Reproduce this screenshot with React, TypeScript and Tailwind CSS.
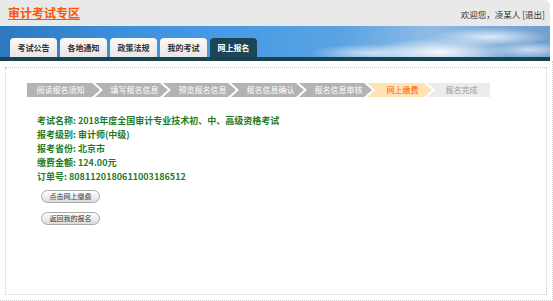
import React from "react";

const steps = [
  { label: "阅读报名须知", w: 73, state: "done" },
  { label: "填写报名信息", w: 73, state: "done" },
  { label: "预览报名信息", w: 73, state: "done" },
  { label: "报名信息确认", w: 73, state: "done" },
  { label: "报名信息审核", w: 73, state: "done" },
  { label: "网上缴费", w: 65, state: "active" },
  { label: "报名完成", w: 63, state: "todo" },
];

const tabs = ["考试公告", "各地通知", "政策法规", "我的考试", "网上报名"];

export default function App() {
  return (
    <div
      className="w-[553px] h-[301px] bg-white overflow-hidden text-[#333]"
      style={{ fontFamily: '"Noto Sans CJK SC", "Noto Sans", sans-serif' }}
    >
      <div className="w-[550px]">
        {/* header */}
        <div className="h-[26px] bg-[#e9e9e9] rounded-tr-[6px] flex items-center justify-between pl-[8px] pr-[5px]">
          <span className="text-[12px] leading-[12px] font-bold text-[#ff5400] underline underline-offset-[1px]">
            审计考试专区
          </span>
          <span className="text-[8.5px] leading-[9px] text-[#333] pt-[2px]">
            欢迎您，凌某人 [退出]
          </span>
        </div>
        {/* banner */}
        <div className="h-[31px] flex items-end pl-[10px] gap-[3px] [background-image:radial-gradient(ellipse_70px_14px_at_440px_26px,rgba(255,255,255,0.9),rgba(255,255,255,0)),radial-gradient(ellipse_60px_9px_at_490px_11px,rgba(240,245,252,0.85),rgba(255,255,255,0)),radial-gradient(ellipse_60px_9px_at_370px_27px,rgba(235,242,250,0.75),rgba(255,255,255,0)),radial-gradient(ellipse_40px_8px_at_530px_24px,rgba(240,245,252,0.7),rgba(255,255,255,0)),linear-gradient(90deg,#2c78c0_0%,#3c91dc_22%,#4a9ce6_45%,#5aa3e2_62%,#8fbbe4_78%,#6f9fcf_100%)]">
          {tabs.map((t, i) => (
            <div
              key={t}
              className={
                i === 4
                  ? "w-[47px] h-[19px] rounded-t-[4px] bg-[#1c4656] text-white text-[8px] font-bold flex items-center justify-center"
                  : "w-[47px] h-[19px] rounded-t-[4px] bg-[linear-gradient(#fafafa,#e6e6e6)] text-[#333] text-[8px] font-bold flex items-center justify-center"
              }
            >
              {t}
            </div>
          ))}
        </div>
        <div className="h-[4px] bg-[#1a4352]" />
      </div>
      {/* body */}
      <div className="w-[553px] h-[240px] border-r border-b border-dotted border-[#cfcfcf] pt-[6px] pl-[5px]">
        <div className="w-[542px] h-[228px] border border-dotted border-[#c8c8c8] pt-[15px]">
          {/* steps */}
          <div className="flex pl-[21px] h-[14px]">
            {steps.map((s, i) => {
              const first = i === 0;
              const last = i === steps.length - 1;
              const clip = first
                ? "[clip-path:polygon(0_0,calc(100%-8px)_0,100%_50%,calc(100%-8px)_100%,0_100%)]"
                : last
                ? "[clip-path:polygon(0_0,100%_0,100%_100%,0_100%,8px_50%)]"
                : "[clip-path:polygon(0_0,calc(100%-8px)_0,100%_50%,calc(100%-8px)_100%,0_100%,8px_50%)]";
              const color =
                s.state === "done"
                  ? "bg-[#b3b3b3] text-white"
                  : s.state === "active"
                  ? "bg-[#fde3b6] text-[#ff5a00]"
                  : "bg-[#ececec] text-[#9a9a9a]";
              return (
                <div
                  key={s.label}
                  style={{ width: s.w }}
                  className={`${clip} ${color} ${first ? "" : "-ml-[5px]"} h-[14px] text-[8px] leading-[14px] flex items-center justify-center ${first ? "pr-[6px]" : "pl-[6px]"}`}
                >
                  {s.label}
                </div>
              );
            })}
          </div>
          {/* info */}
          <div className="mt-[17px] pl-[31px] text-[9px] leading-[14px] font-bold text-[#1f7b1f]">
            <div>考试名称: 2018年度全国审计专业技术初、中、高级资格考试</div>
            <div>报考级别: 审计师(中级)</div>
            <div>报考省份: 北京市</div>
            <div>缴费金额: 124.00元</div>
            <div>订单号: 8081120180611003186512</div>
          </div>
          <div className="pl-[35px] mt-[6px] flex flex-col gap-[9px]">
            <button className="w-[59px] h-[13px] rounded-full border border-[#a9a9a9] bg-[linear-gradient(#ffffff,#dcdcdc)] text-[7px] leading-[11px] text-[#333] flex items-center justify-center">
              点击网上缴费
            </button>
            <button className="w-[59px] h-[13px] rounded-full border border-[#a9a9a9] bg-[linear-gradient(#ffffff,#dcdcdc)] text-[7px] leading-[11px] text-[#333] flex items-center justify-center">
              返回我的报名
            </button>
          </div>
        </div>
      </div>
    </div>
  );
}
